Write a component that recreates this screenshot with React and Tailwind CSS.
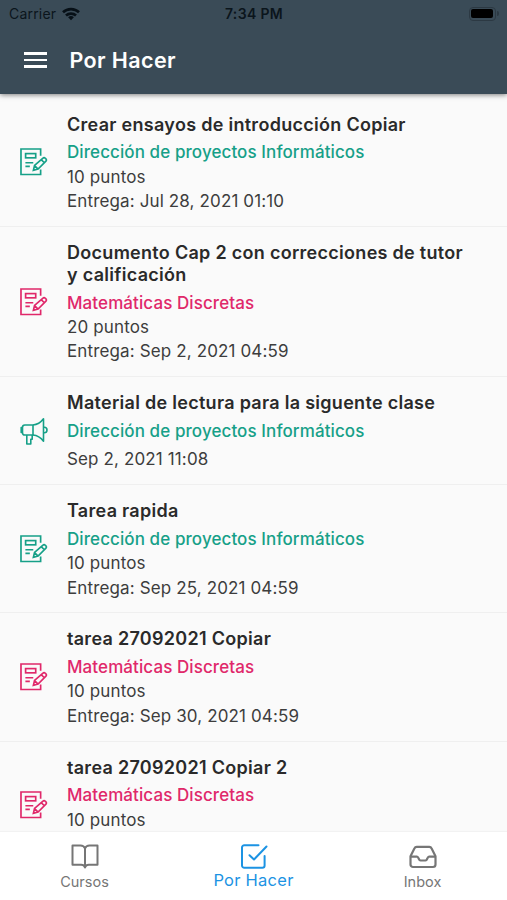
import React, { useState } from 'react';

const TEAL = 'text-[#16a088]';
const PINK = 'text-[#e0286a]';

const todos = [
  { id: 1, type: 'assignment', title: 'Crear ensayos de introducción Copiar', course: 'Dirección de proyectos Informáticos', color: TEAL, points: '10 puntos', date: 'Entrega: Jul 28, 2021 01:10' },
  { id: 2, type: 'assignment', title: 'Documento Cap 2 con correcciones de tutor y calificación', course: 'Matemáticas Discretas', color: PINK, points: '20 puntos', date: 'Entrega: Sep 2, 2021 04:59' },
  { id: 3, type: 'announcement', title: 'Material de lectura para la siguente clase', course: 'Dirección de proyectos Informáticos', color: TEAL, date: 'Sep 2, 2021 11:08' },
  { id: 4, type: 'assignment', title: 'Tarea rapida', course: 'Dirección de proyectos Informáticos', color: TEAL, points: '10 puntos', date: 'Entrega: Sep 25, 2021 04:59' },
  { id: 5, type: 'assignment', title: 'tarea 27092021 Copiar', course: 'Matemáticas Discretas', color: PINK, points: '10 puntos', date: 'Entrega: Sep 30, 2021 04:59' },
  { id: 6, type: 'assignment', title: 'tarea 27092021 Copiar 2', course: 'Matemáticas Discretas', color: PINK, points: '10 puntos', date: '' },
];

const AssignmentIcon = () => (
  <svg width="28" height="28" viewBox="0 0 28.500 28.500" fill="none" stroke="currentColor" strokeWidth="1.700">
    <path d="M21 8V1H1v26h20v-5" />
    <rect x="5.7" y="5.7" width="10.300" height="4.300" />
    <path d="M5.500 15h8M5.500 18.700h4.500" />
    <path d="M13.600 22.800l1.200-5 8.600-7.500a1.500 1.500 0 0 1 2.200 0l.8.8a1.500 1.500 0 0 1 0 2.200L18.400 21.500l-4.800 1.300zM14.800 17.800l3.600 3.700M21.600 11.800l3.200 3.200" />
  </svg>
);

const AnnouncementIcon = () => (
  <svg width="28" height="28" viewBox="0 0 28 28" fill="none" stroke="currentColor" strokeWidth="1.600" strokeLinejoin="round">
    <path d="M13 8H4.800a2.300 2.300 0 0 0-2.300 2.300v5.400A2.300 2.300 0 0 0 4.800 18H13zM2.500 10.500H1.200v5h1.300" />
    <path d="M13 8c4-.3 7.500-2.200 10.500-6.200v22.400C20.500 20.200 17 18.300 13 18" />
    <path d="M23.500 10.300h.8a2.500 2.500 0 0 1 0 5.400h-.8" />
    <path d="M6.800 18v9h4v-4.800h1.400V18" />
  </svg>
);

const WifiIcon = () => (
  <svg width="18" height="14" viewBox="0 0 18 14" fill="none" stroke="#071017" strokeWidth="2.700">
    <path d="M1 5.300C5.500 1.100 12.500 1.100 17 5.300" />
    <path d="M4 8.600C6.800 6 11.200 6 14 8.600" />
    <path d="M6.100 10.300c1.700-1.600 4.100-1.600 5.800 0L9 13.300z" fill="#071017" stroke="none" />
  </svg>
);

const BookIcon = () => (
  <svg width="28" height="26" viewBox="0 0 28 26" fill="none" stroke="currentColor" strokeWidth="2" strokeLinejoin="round">
    <path d="M14 4.500C13.300 2.500 11.800 1.500 9.500 1.500H1.500v19.300h8.700c2.200 0 3.300.9 3.800 2.700.5-1.800 1.600-2.700 3.800-2.700h8.700V1.500h-8c-2.300 0-3.800 1-4.500 3zM14 4.500v19" />
  </svg>
);

const CheckIcon = () => (
  <svg width="28" height="26" viewBox="0 0 28 26" fill="none" stroke="currentColor" strokeWidth="2" strokeLinecap="round" strokeLinejoin="round">
    <path d="M18.500 1.200H4.300A2.300 2.300 0 0 0 2 3.500v18a2.300 2.300 0 0 0 2.300 2.300h18a2.300 2.300 0 0 0 2.300-2.300v-9.500" />
    <path d="M9.500 11.300l4.500 4.200L26.500 2.500" />
  </svg>
);

const InboxIcon = () => (
  <svg width="28" height="26" viewBox="0 0 28 26" fill="none" stroke="currentColor" strokeWidth="2.200" strokeLinejoin="round">
    <path d="M1.500 12.300 5.500 4.300A2.500 2.500 0 0 1 7.700 2.800h12.600a2.500 2.500 0 0 1 2.200 1.500l4 8v8.200a2.500 2.500 0 0 1-2.500 2.500H4a2.500 2.500 0 0 1-2.500-2.500z" />
    <path d="M1.500 12.700H8c1.800 0 1.500 3.800 3.500 3.800h5c2 0 1.700-3.800 3.500-3.800h6.500" />
  </svg>
);

const tabs = [
  { id: 'cursos', label: 'Cursos', Icon: BookIcon },
  { id: 'todo', label: 'Por Hacer', Icon: CheckIcon },
  { id: 'inbox', label: 'Inbox', Icon: InboxIcon },
];

const TodoRow = ({ item }) => (
  <li className="flex items-center border-b border-[#efefef] pt-[15px] pb-[12.200px] pl-5">
    <span className={`-mt-[2.500px] w-[47px] shrink-0 ${item.color}`}>
      {item.type === 'assignment' ? <AssignmentIcon /> : <AnnouncementIcon />}
    </span>
    <div className="flex-1 pr-10">
      <h2 className="mb-[4.800px] text-[18px] font-semibold leading-[22px] tracking-[0.290px] text-[#2a2a2a]">{item.title}</h2>
      <p className={`text-[17px] font-medium leading-[24.300px] tracking-[0.090px] ${item.color}`}>{item.course}</p>
      {item.points && <p className="text-[17px] leading-[24.500px] tracking-[0.130px] text-[#3d3d3d]">{item.points}</p>}
      <p className={`min-h-[24.500px] text-[17px] leading-[24.500px] tracking-[0.130px] text-[#3d3d3d] ${item.points ? '' : 'pt-[4px]'}`}>{item.date}</p>
    </div>
  </li>
);

const App = () => {
  const [active, setActive] = useState('todo');

  return (
    <div className="flex h-[900px] w-[507px] flex-col overflow-hidden bg-[#fafafa] font-['Inter',sans-serif]">
      <header className="z-10 h-[94px] shrink-0 bg-[#3a4b57] shadow-[0_1px_5px_rgba(0,0,0,0.5)]">
        <div className="grid h-[27px] grid-cols-3 items-center pl-[9px] pr-[8px] text-[14px] text-[#0b151c]">
          <div className="flex items-center gap-[6px]">
            <span className="tracking-[0.200px]">Carrier</span>
            <WifiIcon />
          </div>
          <span className="text-center text-[14px] font-semibold tracking-[0.350px]">7:34 PM</span>
          <div className="flex items-center justify-end">
            <span className="flex h-[14px] w-[27px] rounded-[4px] border border-[#2c3943] p-[1.500px]">
              <span className="flex-1 rounded-[2px] bg-black" />
            </span>
            <span className="ml-px h-[5px] w-[2px] rounded-r bg-[#2c3943]" />
          </div>
        </div>
        <div className="flex h-[66px] items-center pl-6">
          <button aria-label="Menu" className="flex w-[23px] flex-col gap-[4px]">
            <span className="h-[2.500px] bg-white" />
            <span className="h-[2.500px] bg-white" />
            <span className="h-[2.500px] bg-white" />
          </button>
          <h1 className="ml-[22.500px] text-[21.500px] font-semibold tracking-[0.400px] text-white">Por Hacer</h1>
        </div>
      </header>

      <ul className="min-h-0 flex-1 overflow-hidden pt-[4.600px]">
        {todos.map((item) => (
          <TodoRow key={item.id} item={item} />
        ))}
      </ul>

      <nav className="grid h-[68px] shrink-0 grid-cols-3 bg-white shadow-[0_-1px_1px_rgba(0,0,0,0.03)]">
        {tabs.map(({ id, label, Icon }) => (
          <button
            key={id}
            onClick={() => setActive(id)}
            className={`flex flex-col items-center pt-3 ${active === id ? 'text-[#1c93e3]' : 'text-[#767676]'}`}
          >
            <Icon />
            <span className={active === id ? 'text-[16.500px] leading-[20px] tracking-[0.250px]' : 'text-[14.500px] leading-[23px]'}>{label}</span>
          </button>
        ))}
      </nav>
    </div>
  );
};

export default App;
